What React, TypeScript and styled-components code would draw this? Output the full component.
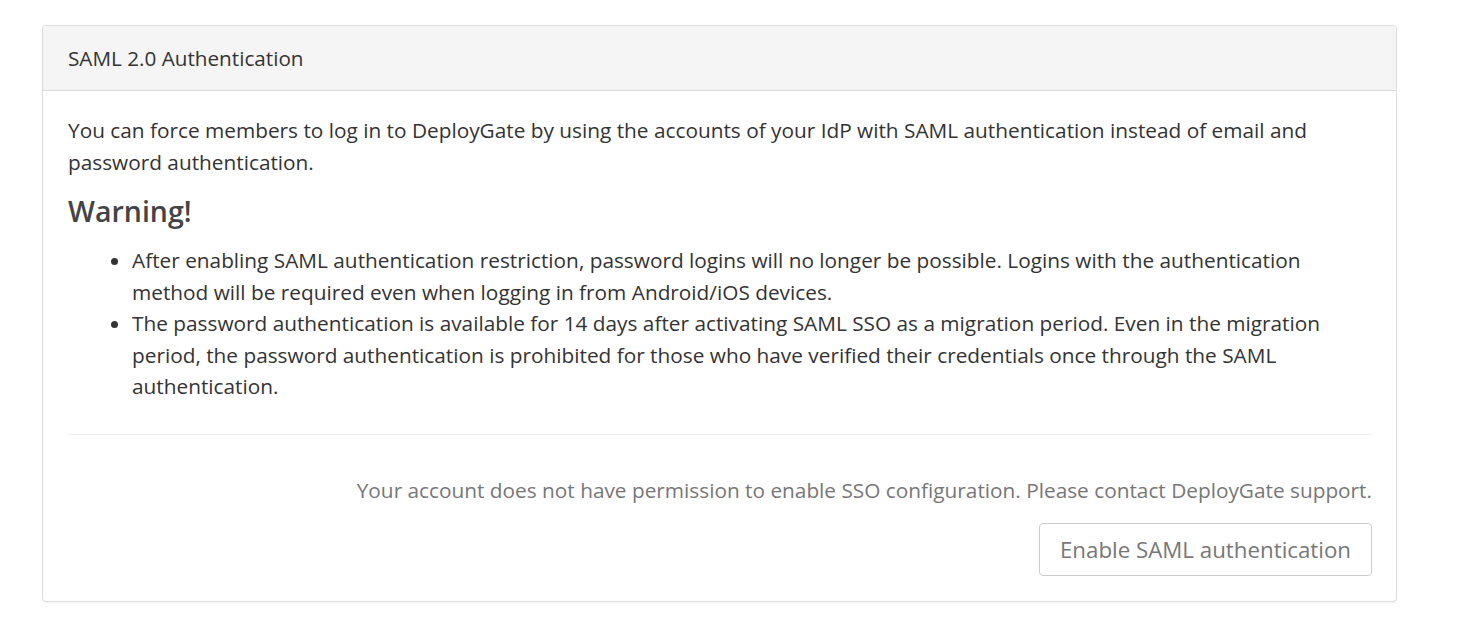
import { FC } from "react";
import styled, { createGlobalStyle } from "styled-components";

const GlobalStyle = createGlobalStyle`
	html, body {
		margin: 0;
		padding: 0;
		background: #fff;
	}
	body {
		font-family: "Open Sans", "Liberation Sans", sans-serif;
		color: #333;
	}
`;

const App: FC = () => {
	return (
		<>
			<GlobalStyle />
			<Page>
				<Panel>
					<PanelHeading>SAML 2.0 Authentication</PanelHeading>
					<PanelBody>
						<Lead>
							You can force members to log in to DeployGate by using the accounts of your IdP with SAML
							authentication instead of email and password authentication.
						</Lead>
						<WarningTitle>Warning!</WarningTitle>
						<Notes>
							<li>
								After enabling SAML authentication restriction, password logins will no longer be possible.
								Logins with the authentication method will be required even when logging in from Android/iOS
								devices.
							</li>
							<li>
								The password authentication is available for 14 days after activating SAML SSO as a migration
								period. Even in the migration period, the password authentication is prohibited for those who
								have verified their credentials once through the SAML authentication.
							</li>
						</Notes>
						<Divider />
						<Footer>
							<Muted>
								Your account does not have permission to enable SSO configuration. Please contact DeployGate
								support.
							</Muted>
							<Button type='button' disabled>
								Enable SAML authentication
							</Button>
						</Footer>
					</PanelBody>
				</Panel>
			</Page>
		</>
	);
};

export default App;

const Page = styled.div`
	padding: 25px 71px 30px 42px;
`;

const Panel = styled.div`
	border: 1px solid #ddd;
	border-radius: 4px;
	background: #fff;
	box-shadow: 0 1px 1px rgba(0, 0, 0, 0.05);
	overflow: hidden;
`;

const PanelHeading = styled.div`
	background: #f5f5f5;
	border-bottom: 1px solid #ddd;
	padding: 20px 25px 20px;
	font-size: 20.7px;
	line-height: 24px;
	color: #333;
`;

const PanelBody = styled.div`
	padding: 23px 24px 25px 25px;
	font-size: 20.8px;
	line-height: 32px;
`;

const Lead = styled.p`
	margin: 0;
`;

const WarningTitle = styled.h3`
	margin: 18px 0 19px;
	font-size: 28.5px;
	line-height: 30px;
	font-weight: 600;
	color: #444;
`;

const Notes = styled.ul`
	margin: 0;
	padding-left: 64px;
	line-height: 31.5px;
`;

const Divider = styled.hr`
	margin: 31px 0 39px;
	border: 0;
	border-top: 1px solid #eee;
`;

const Footer = styled.div`
	display: flex;
	flex-direction: column;
	align-items: flex-end;
	gap: 17px;
`;

const Muted = styled.p`
	margin: 0;
	color: #777;
	text-align: right;
`;

const Button = styled.button`
	height: 53px;
	padding: 0 20px;
	border: 1px solid #ccc;
	border-radius: 4px;
	background: #fff;
	font-family: inherit;
	font-size: 22.3px;
	color: #777;
	cursor: not-allowed;
`;
